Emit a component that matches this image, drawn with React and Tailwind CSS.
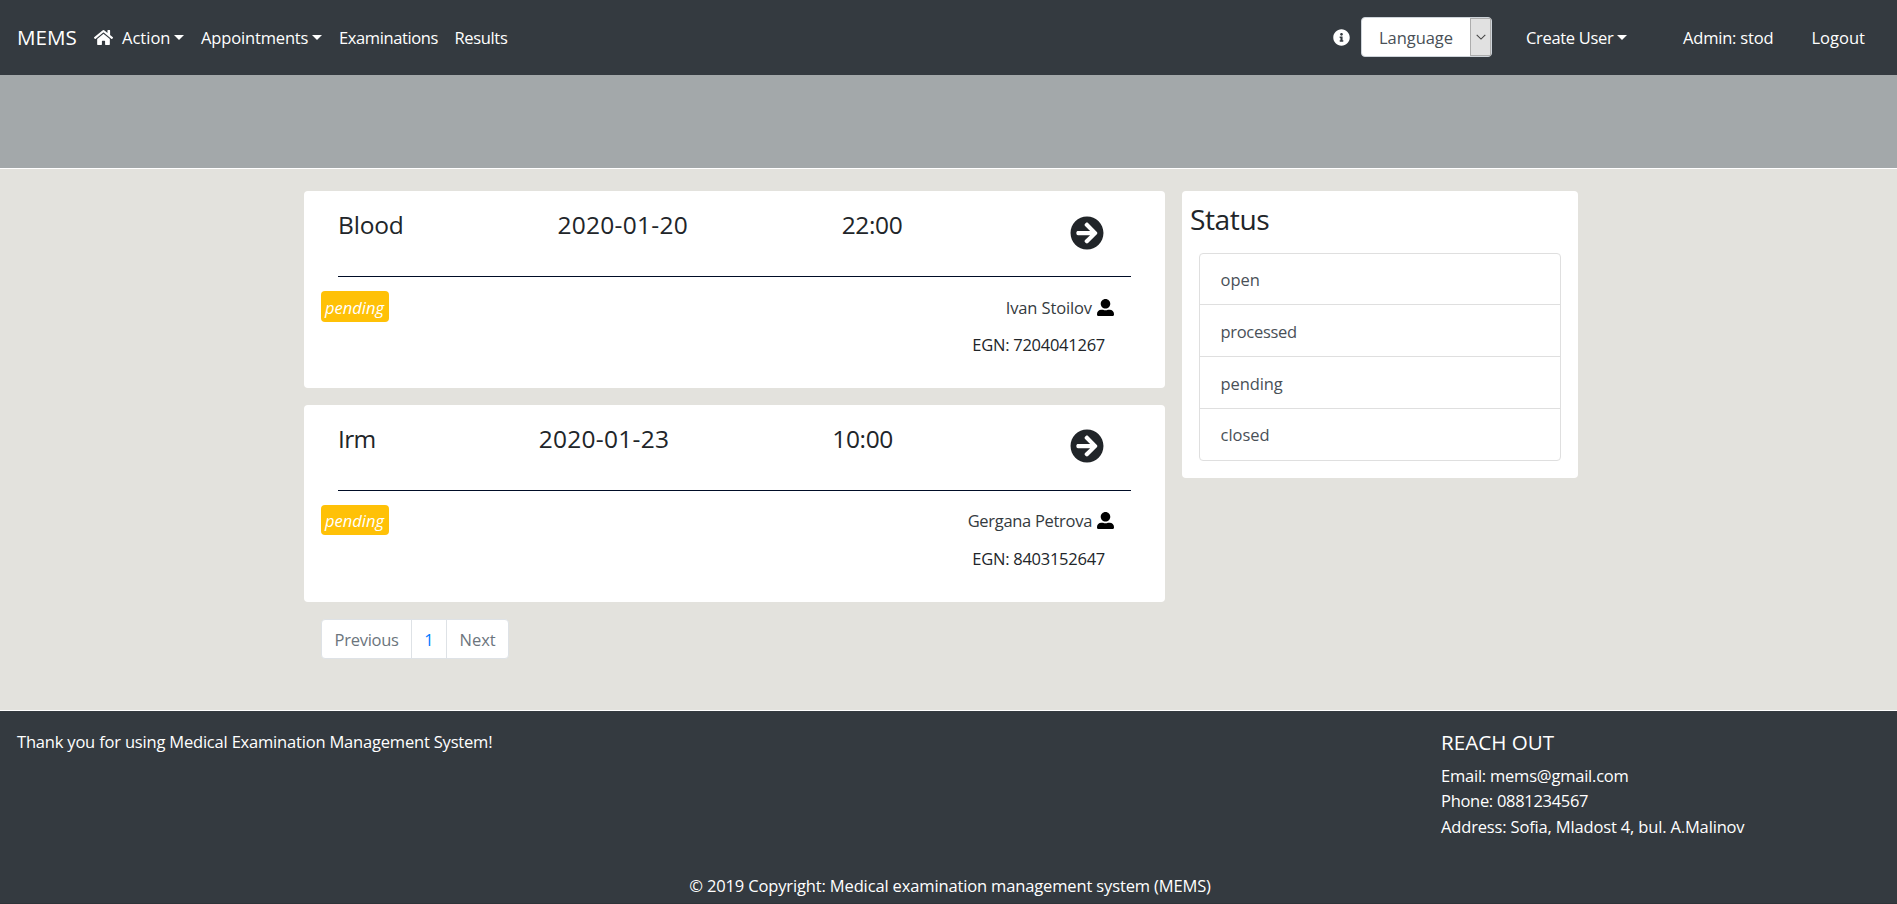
import React from 'react';
import { FaHome, FaInfoCircle, FaArrowCircleRight, FaUserAlt } from 'react-icons/fa';

const Caret = () => (
  <span className="h-0 w-0 border-x-[5px] border-t-[5px] border-x-transparent border-t-white" />
);

function Navbar() {
  return (
    <nav className="flex h-[75px] items-center justify-between bg-[#343a40] text-[16.5px] whitespace-nowrap text-white">
      <div className="flex items-center pl-[17px]">
        <a className="w-[77px] text-[20.6px]">MEMS</a>
        <a className="w-[28px]">
          <FaHome className="h-[17px] w-[19px]" />
        </a>
        <a className="flex w-[79px] items-center">
          <span className="w-[52px] pt-[2px]">Action</span>
          <Caret />
        </a>
        <a className="flex w-[138px] items-center">
          <span className="w-[111px] pt-[2px] tracking-[-0.15px]">Appointments</span>
          <Caret />
        </a>
        <a className="w-[115.5px] pt-[2px] tracking-[-0.4px]">Examinations</a>
        <a className="pt-[2px] tracking-[-0.35px]">Results</a>
      </div>
      <div className="flex w-[564px] items-center">
        <FaInfoCircle className="mr-[11px] h-[17px] w-[17px]" />
        <div className="-mt-[1px] mr-[34px] flex h-[40px] w-[131px] justify-between rounded border border-[#ced4da] bg-white text-[#495057]">
          <span className="pl-[17px] leading-[40px] tracking-[-0.05px]">Language</span>
          <span className="flex w-[21px] items-center justify-center border border-[#adadad] bg-[#e1e1e1]">
            <svg className="mb-[1px] h-[6px] w-[10px]" viewBox="0 0 10 6" fill="none" stroke="#444" strokeWidth="1.1">
              <path d="M0.7 0.9 5 5.1 9.3 0.9" />
            </svg>
          </span>
        </div>
        <a className="flex w-[157px] items-center">
          <span className="w-[91px] pt-[2px] tracking-[-0.32px]">Create User</span>
          <Caret />
        </a>
        <a className="w-[128.5px] pt-[2px] tracking-[-0.2px]">Admin: stod</a>
        <a className="pt-[2px]">Logout</a>
      </div>
    </nav>
  );
}

const exams = [
  {
    type: 'Blood', typeClass: 'tracking-[-0.16px]', date: '2020-01-20', time: '22:00',
    arrowClass: 'pt-[7px]', badgeClass: 'h-[31px] leading-[33px]',
    name: 'Ivan Stoilov', nameClass: 'pt-[1px] tracking-[-0.12px]', egn: '7204041267', egnClass: 'pt-[9px]',
  },
  {
    type: 'Irm', typeClass: 'tracking-[-0.66px]', date: '2020-01-23', time: '10:00',
    arrowClass: 'pt-[6px]', badgeClass: 'h-[30px] leading-[31px]',
    name: 'Gergana Petrova', nameClass: 'tracking-[-0.3px]', egn: '8403152647', egnClass: 'pt-[10px]',
  },
];

function ExamCard({ exam }) {
  return (
    <article className="h-[197px] rounded bg-white whitespace-nowrap text-[#212529]">
      <div className="mx-[34px] flex h-[86px] justify-between border-b border-[#000c26] pt-[18px] text-[24.5px] leading-[31px]">
        <h4 className={exam.typeClass}>{exam.type}</h4>
        <h4 className="pl-[1px] tracking-[0.28px]">{exam.date}</h4>
        <h4 className="pl-[1px] tracking-[-0.38px]">{exam.time}</h4>
        <a className={`w-[76px] pl-[15px] ${exam.arrowClass}`}>
          <FaArrowCircleRight className="h-[34px] w-[34px]" />
        </a>
      </div>
      <div className="flex items-start justify-between pt-[14px] pl-[17px] text-[16.5px]">
        <span className={`w-[68px] rounded bg-[#ffc107] pl-[4px] text-white italic ${exam.badgeClass}`}>pending</span>
        <div className="flex flex-col items-end pr-[51px] leading-[31px]">
          <div className={`flex items-center ${exam.nameClass}`}>
            <span className="text-[#343a40]">{exam.name}</span>
            <FaUserAlt className="ml-[5px] h-[17px] w-[17px] text-black" />
          </div>
          <div className={`pr-[9px] leading-[25px] tracking-[-0.26px] ${exam.egnClass}`}>
            EGN: {exam.egn}
          </div>
        </div>
      </div>
    </article>
  );
}

function Pagination() {
  return (
    <ul className="mt-[17px] ml-[17px] flex h-[40px] w-[188px] rounded border border-[#dee2e6] bg-white text-[16.5px] leading-[40px] text-[#6c757d]">
      <li className="w-[90px] border-r border-[#dee2e6] pl-[12.5px] tracking-[-0.26px]">Previous</li>
      <li className="w-[35px] border-r border-[#dee2e6] text-center text-[#007bff]">1</li>
      <li className="pl-[12.5px]">Next</li>
    </ul>
  );
}

const statuses = [
  { label: 'open', className: 'h-[50px] leading-[51px]' },
  { label: 'processed', className: 'h-[52px] border-t leading-[53px] tracking-[-0.3px]' },
  { label: 'pending', className: 'h-[52px] border-t leading-[53px] tracking-[-0.1px]' },
  { label: 'closed', className: 'h-[52px] border-t leading-[51px]' },
];

function StatusPanel() {
  return (
    <aside className="h-[287px] w-[396px] rounded bg-white">
      <h3 className="h-[62px] pt-[8px] pl-[8px] text-[28.2px] leading-[40px] tracking-[-0.45px] text-[#212529]">Status</h3>
      <ul className="ml-[17px] w-[362px] rounded border border-[#dfdfdf] text-[16.5px] text-[#495057]">
        {statuses.map((s) => (
          <li key={s.label} className={`border-[#dfdfdf] pl-[20.5px] ${s.className}`}>{s.label}</li>
        ))}
      </ul>
    </aside>
  );
}

function Footer() {
  return (
    <footer className="flex h-[194px] flex-col border-t border-white bg-[#343a40] text-[16.5px] leading-[25.5px] whitespace-nowrap text-white">
      <div className="flex h-[162px] justify-between pt-[18px] pl-[17px]">
        <p className="tracking-[-0.19px]">Thank you for using Medical Examination Management System!</p>
        <div className="w-[456px]">
          <h5 className="h-[34px] text-[20.6px] leading-[26px]">REACH OUT</h5>
          <p className="leading-[25px] tracking-[-0.22px]">Email: mems@gmail.com</p>
          <p className="leading-[25px] tracking-[-0.3px]">Phone: 0881234567</p>
          <p className="leading-[27px] tracking-[-0.16px]">Address: Sofia, Mladost 4, bul. A.Malinov</p>
        </div>
      </div>
      <div className="flex-1 border-b border-[#2e3338] pl-[3px] text-center tracking-[-0.14px]">
        © 2019 Copyright: Medical examination management system (MEMS)
      </div>
    </footer>
  );
}

export default function App() {
  return (
    <div className="h-[904px] overflow-hidden bg-[#e3e2dd] font-['Open_Sans',sans-serif]">
      <Navbar />
      <div className="h-[94px] border-b border-white bg-[#a3a8aa]" />
      <main className="flex h-[541px] gap-[17px] pt-[22px] pl-[304px]">
        <section className="w-[861px]">
          <div className="flex flex-col gap-[17px]">
            {exams.map((exam) => <ExamCard key={exam.egn} exam={exam} />)}
          </div>
          <Pagination />
        </section>
        <StatusPanel />
      </main>
      <Footer />
    </div>
  );
}
